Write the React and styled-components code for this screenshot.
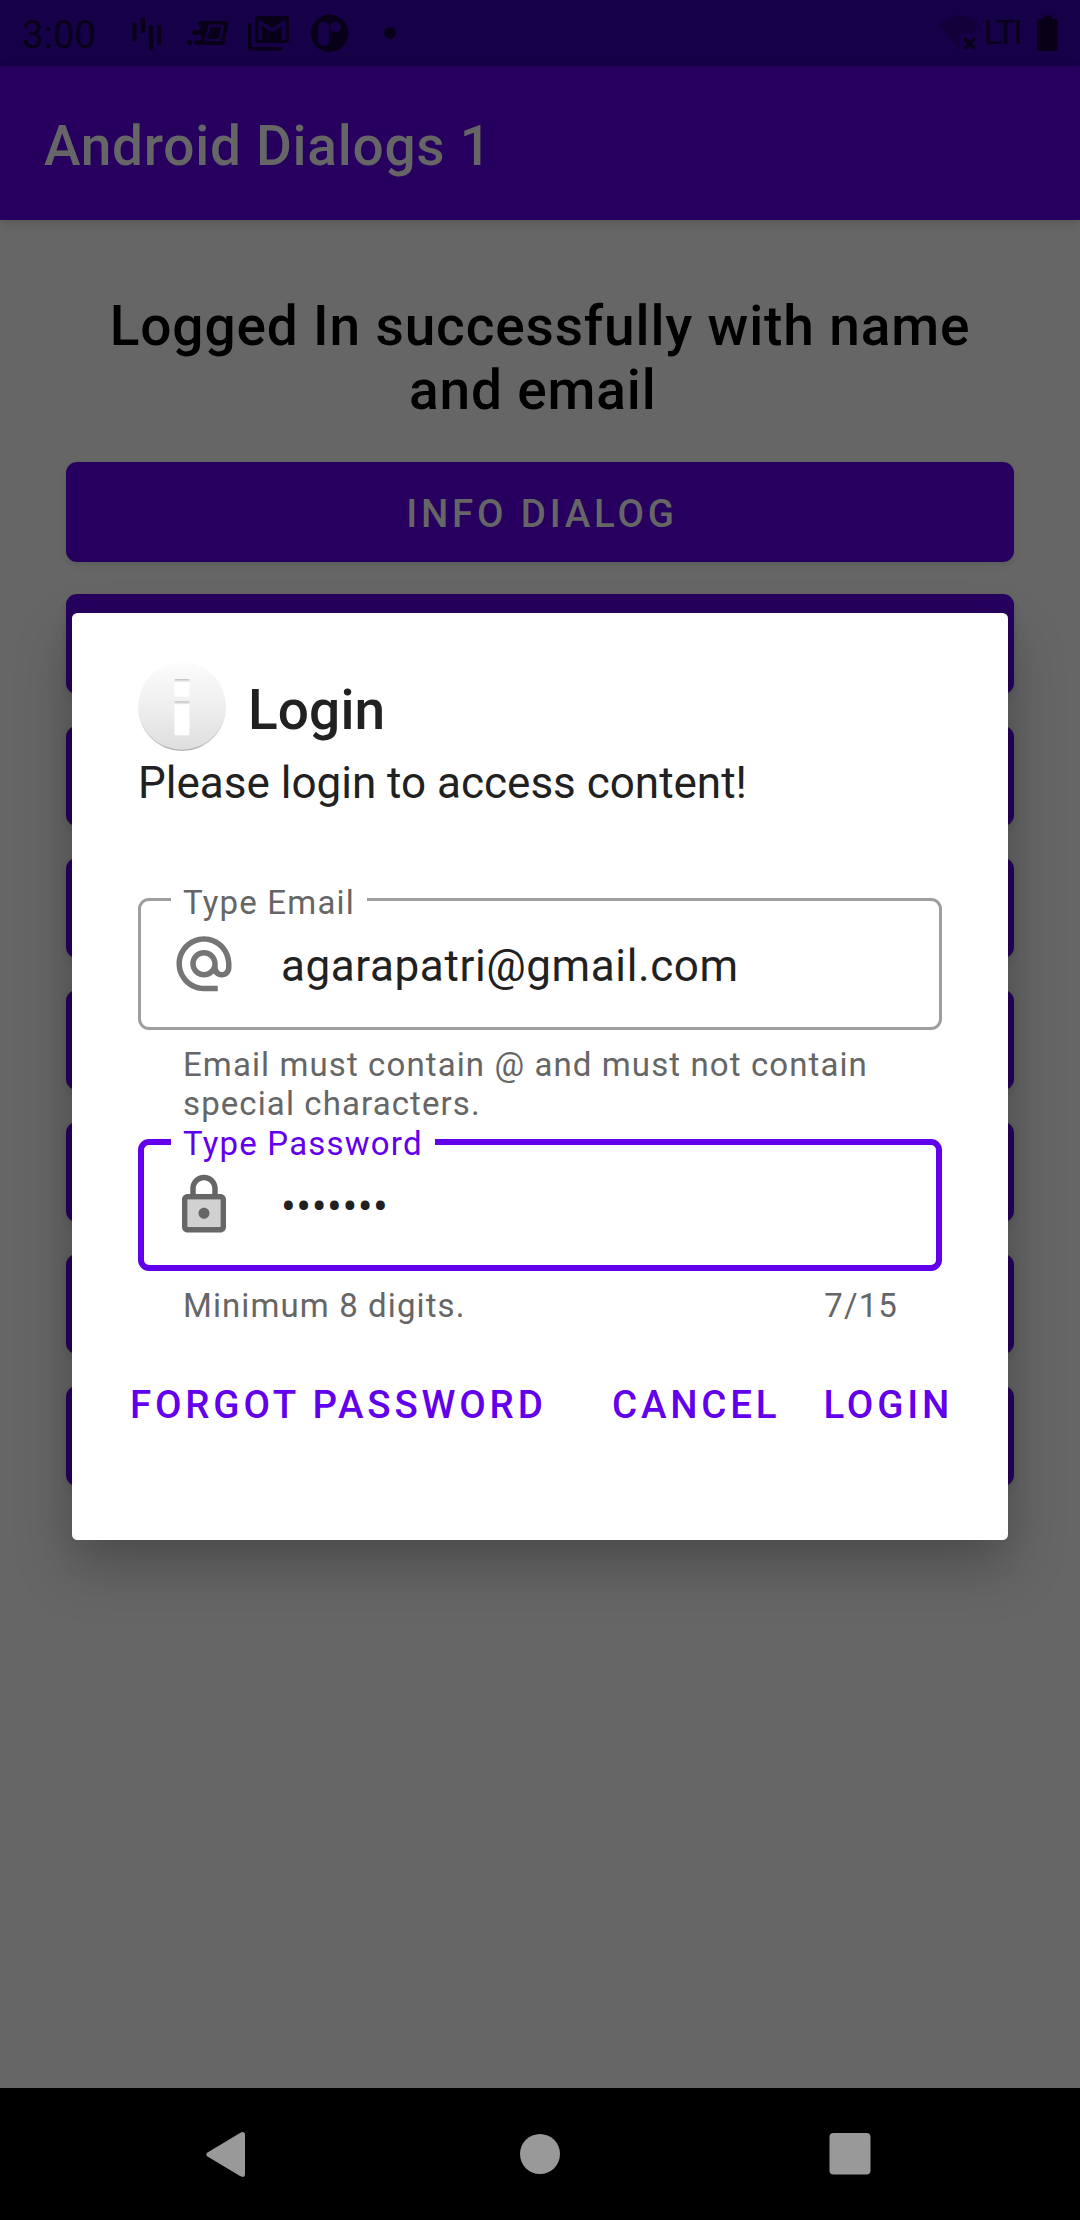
import React from "react";
import styled, { createGlobalStyle, css } from "styled-components";

const GlobalStyle = createGlobalStyle`
  *, *::before, *::after { box-sizing: border-box; }
  body { margin: 0; background: #000; font-family: Roboto, "Noto Sans", sans-serif; }
  h1, h2, p { margin: 0; }
  button { font-family: inherit; border: 0; margin: 0; padding: 0; }
  svg { display: block; flex: none; }
`;

const Phone = styled.div`
  position: relative;
  width: 1080px;
  height: 2220px;
  display: flex;
  flex-direction: column;
  overflow: hidden;
`;

const StatusBar = styled.header`
  height: 66px;
  flex: none;
  display: flex;
  justify-content: space-between;
  background: #160048;
  color: #080019;
`;

const StatusGroup = styled.div`
  display: flex;
  align-items: center;
  height: 66px;
`;

const Clock = styled.span`
  width: 110px;
  padding-left: 22px;
  font-size: 38.5px;
  line-height: 45px;
  padding-top: 2px;
`;

const Network = styled.span`
  width: 52px;
  font-size: 33.5px;
  line-height: 40px;
  padding-left: 2px;
  letter-spacing: -2px;
`;

const AppBar = styled.div`
  position: relative;
  height: 154px;
  flex: none;
  display: flex;
  align-items: center;
  padding-left: 44px;
  background: #27005f;
  box-shadow: 0 3px 10px rgba(0, 0, 0, 0.14);
`;

const AppTitle = styled.h1`
  font-size: 55px;
  font-weight: 500;
  line-height: 64px;
  letter-spacing: 0.72px;
  padding-top: 6px;
  color: #666;
`;

const Main = styled.main`
  flex: 1;
  display: flex;
  flex-direction: column;
  padding: 74px 66px 0;
  background: #666;
`;

const Result = styled.h2`
  font-size: 55px;
  font-weight: 500;
  line-height: 64px;
  letter-spacing: 0.85px;
  text-align: center;
  color: #000;
  margin-bottom: 40px;
`;

const ButtonStack = styled.div`
  display: flex;
  flex-direction: column;
  gap: 32px;
`;

const buttonText = css`
  font-size: 38.5px;
  font-weight: 500;
  line-height: 45px;
  letter-spacing: 3.8px;
  text-transform: uppercase;
`;

const FilledButton = styled.button`
  ${buttonText}
  height: 100px;
  padding: 3px 0 0 4px;
  border-radius: 11px;
  background: #27005f;
  color: #666;
  box-shadow: 0 3px 6px rgba(0, 0, 0, 0.1);
`;

const DialogLayer = styled.div`
  position: absolute;
  top: 66px;
  left: 0;
  right: 0;
  bottom: 133px;
  display: flex;
  align-items: center;
  justify-content: center;
`;

const Dialog = styled.section`
  width: 936px;
  height: 927px;
  padding: 50px 66px 0;
  border-radius: 5.5px;
  background: #fff;
  color: #212121;
  box-shadow: 0 26px 56px rgba(0, 0, 0, 0.25), 0 0 30px rgba(0, 0, 0, 0.05);
`;

const DialogHeader = styled.div`
  display: flex;
  align-items: center;
  gap: 22px;
  height: 88px;
`;

const DialogTitle = styled.h2`
  font-size: 55px;
  font-weight: 500;
  line-height: 64px;
  letter-spacing: 0.1px;
  padding-top: 6px;
`;

const Message = styled.p`
  margin-top: 6px;
  font-size: 44px;
  line-height: 52px;
`;

const Fields = styled.div`
  margin-top: 89px;
  display: flex;
  flex-direction: column;
  gap: 16px;
`;

const FieldBox = styled.div`
  position: relative;
  height: 132px;
  display: flex;
  align-items: center;
  padding-left: ${(p) => (p.$active ? 27 : 30)}px;
  border: ${(p) => (p.$active ? "6px solid #6200ee" : "3px solid #9e9e9e")};
  border-radius: 11px;
`;

const FieldLabel = styled.label`
  position: absolute;
  top: ${(p) => (p.$active ? -21 : -18)}px;
  left: ${(p) => (p.$active ? 27 : 30)}px;
  padding: 0 12px;
  background: #fff;
  color: ${(p) => (p.$active ? "#6200ee" : "#666")};
  font-size: 33px;
  line-height: 39px;
  letter-spacing: 1.2px;
`;

const FieldValue = styled.span`
  margin-left: 44px;
  padding-top: 4px;
  font-size: 44px;
  line-height: 52px;
  letter-spacing: ${(p) => (p.$masked ? "0.5px" : "0.6px")};
`;

const HelperRow = styled.div`
  display: flex;
  justify-content: space-between;
  margin: 15px 44px 0 45px;
  color: #666;
  font-size: 33px;
  line-height: 39px;
  letter-spacing: 1.1px;
`;

const Actions = styled.div`
  display: flex;
  margin: 57px -11px 0 -8px;
`;

const TextButton = styled.button`
  ${buttonText}
  background: none;
  color: #6200ee;
  &:first-child { margin-right: auto; }
  & + & + & { margin-left: 43px; }
`;

const NavBar = styled.nav`
  height: 132px;
  flex: none;
  display: flex;
  align-items: center;
  justify-content: center;
  gap: 244px;
  background: #000;
`;

function NotificationIcons() {
  return (
    <svg width="290" height="66" viewBox="110 0 290 66" fill="#080019">
      <rect x="132.5" y="22.5" width="4" height="19" rx="2" />
      <rect x="140.5" y="17.5" width="4.5" height="15.5" rx="2" />
      <rect x="148.8" y="25" width="4.2" height="25.5" rx="2" />
      <rect x="157" y="25" width="4.3" height="20" rx="2" />
      <circle cx="189.5" cy="42.5" r="2.6" />
      <path fillRule="evenodd" d="M201 21H226Q228.5 21 228 24L224.5 43Q224 45 222 45H196Q194 45 194 43T196 40.5H200.5L201.500 35H194.500Q192 35 192 32.500T194.500 30H199L201.500 26H200Q198 26 198 23.500T201 21ZM208.500 24.500L204.500 41H221L224.500 24.500ZM210.500 27H221.500L218.500 39H207Z" />
      <path d="M248 23V47.500Q248 50.500 251 50.500H282V47H251.500V23Z" />
      <path fillRule="evenodd" d="M258.500 16H286Q289 16 289 19V40Q289 43 286 43H258.500Q255 43 255 40V19Q255 16 258.500 16ZM258.500 20V40H262V25L272 32.500L282 25V40H285.500V20H284L272 28.500L260 20Z" />
      <circle cx="329.500" cy="33.300" r="18.700" />
      <rect x="318" y="21.500" width="11" height="24.500" rx="5.500" fill="#160048" />
      <circle cx="335.300" cy="27" r="5.200" fill="#160048" />
      <circle cx="390" cy="33" r="6" />
    </svg>
  );
}

function WifiIcon() {
  return (
    <svg width="44" height="66" viewBox="938 0 44 66">
      <path d="M938.500 24Q958.500 7 979 24L971 34H960V48L958.500 49Z" fill="#11003a" />
      <path d="M965.500 39.500L973.500 47.500M973.500 39.500L965.500 47.500" stroke="#080019" strokeWidth="3.600" strokeLinecap="round" />
    </svg>
  );
}

function BatteryIcon() {
  return (
    <svg width="46" height="66" viewBox="1034 0 46 66">
      <path d="M1043.500 15.500h8.500v3.500h4q2 0 2 2v28q0 2-2 2h-17q-2 0-2-2v-28q0-2 2-2h4.500z" fill="#080019" />
    </svg>
  );
}

function InfoIcon() {
  return (
    <svg width="88" height="88" viewBox="0 0 88 88">
      <defs>
        <linearGradient id="disc" x1="0" y1="0" x2="0" y2="1">
          <stop offset="0" stopColor="#fcfcfc" />
          <stop offset="0.5" stopColor="#efefef" />
          <stop offset="1" stopColor="#dedede" />
        </linearGradient>
        <linearGradient id="rim" x1="0" y1="0" x2="0" y2="1">
          <stop offset="0.4" stopColor="#b4b4b4" stopOpacity="0" />
          <stop offset="1" stopColor="#b0b0b0" />
        </linearGradient>
        <linearGradient id="inset" x1="0" y1="0" x2="0" y2="1">
          <stop offset="0" stopColor="#bdbdbd" />
          <stop offset="1" stopColor="#fff" />
        </linearGradient>
      </defs>
      <circle cx="44" cy="44" r="44" fill="url(#rim)" />
      <circle cx="44" cy="43" r="43.700" fill="url(#disc)" />
      <rect x="36.500" y="16" width="15" height="17.500" rx="1.500" fill="#fff" />
      <rect x="36.500" y="16" width="15" height="3.500" rx="1" fill="url(#inset)" />
      <rect x="36.500" y="38.300" width="15" height="34" rx="1.500" fill="#fff" />
      <rect x="36.500" y="38.300" width="15" height="3.500" rx="1" fill="url(#inset)" />
    </svg>
  );
}

function AtIcon() {
  return (
    <svg width="66" height="66" viewBox="0 0 24 24" fill="#757575">
      <path d="M12 1.950c-5.520 0-10 4.480-10 10s4.480 10 10 10h5v-2h-5c-4.340 0-8-3.660-8-8s3.660-8 8-8 8 3.660 8 8v1.430c0 .79-.71 1.570-1.500 1.570s-1.500-.78-1.500-1.570v-1.430c0-2.760-2.240-5-5-5s-5 2.240-5 5 2.240 5 5 5c1.380 0 2.640-.56 3.540-1.470.65.89 1.770 1.470 2.960 1.470 1.970 0 3.500-1.600 3.500-3.570v-1.430c0-5.520-4.480-10-10-10zm0 13c-1.660 0-3-1.340-3-3s1.340-3 3-3 3 1.340 3 3-1.340 3-3 3z" />
    </svg>
  );
}

function LockIcon() {
  return (
    <svg width="66" height="66" viewBox="0 0 24 24" fill="#666">
      <path d="M6 20h12V10H6v10z" fill="#d1d1d1" />
      <path d="M18 8h-1V6c0-2.760-2.240-5-5-5S7 3.240 7 6v2H6c-1.100 0-2 .9-2 2v10c0 1.100.9 2 2 2h12c1.100 0 2-.9 2-2V10c0-1.100-.9-2-2-2zM9 6c0-1.660 1.340-3 3-3s3 1.340 3 3v2H9V6zm9 14H6V10h12v10zm-6-3c1.100 0 2-.9 2-2s-.9-2-2-2-2 .9-2 2 .9 2 2 2z" />
    </svg>
  );
}

function Field({ label, value, icon, helper, counter, active, masked }) {
  return (
    <div>
      <FieldBox $active={active}>
        <FieldLabel $active={active}>{label}</FieldLabel>
        {icon}
        <FieldValue $masked={masked}>{value}</FieldValue>
      </FieldBox>
      <HelperRow>
        <span>{helper}</span>
        {counter && <span>{counter}</span>}
      </HelperRow>
    </div>
  );
}

const menuButtons = ["Info Dialog", "", "", "", "", "", "", ""];

export default function App() {
  return (
    <>
      <GlobalStyle />
      <Phone>
        <StatusBar>
          <StatusGroup>
            <Clock>3:00</Clock>
            <NotificationIcons />
          </StatusGroup>
          <StatusGroup>
            <WifiIcon />
            <Network>LTI</Network>
            <BatteryIcon />
          </StatusGroup>
        </StatusBar>
        <AppBar>
          <AppTitle>Android Dialogs 1</AppTitle>
        </AppBar>
        <Main>
          <Result>Logged In successfully with name and email&nbsp;</Result>
          <ButtonStack>
            {menuButtons.map((text, i) => (
              <FilledButton key={i}>{text}</FilledButton>
            ))}
          </ButtonStack>
        </Main>
        <DialogLayer>
          <Dialog role="dialog">
            <DialogHeader>
              <InfoIcon />
              <DialogTitle>Login</DialogTitle>
            </DialogHeader>
            <Message>Please login to access content!</Message>
            <Fields>
              <Field
                label="Type Email"
                value="agarapatri@gmail.com"
                icon={<AtIcon />}
                helper="Email must contain @ and must not contain special characters."
              />
              <Field
                active
                masked
                label="Type Password"
                value="•••••••"
                icon={<LockIcon />}
                helper="Minimum 8 digits."
                counter="7/15"
              />
            </Fields>
            <Actions>
              <TextButton>Forgot Password</TextButton>
              <TextButton>Cancel</TextButton>
              <TextButton>Login</TextButton>
            </Actions>
          </Dialog>
        </DialogLayer>
        <NavBar>
          <svg width="66" height="66" viewBox="0 0 66 66" fill="#999">
            <path d="M10.500 31.500L43 11.900Q47.800 9.600 48 14V53Q47.800 57.400 43 55.100L10.500 35.500Q8 33.500 10.500 31.500Z" />
          </svg>
          <svg width="66" height="66" viewBox="0 0 66 66" fill="#999">
            <circle cx="33" cy="33" r="20" />
          </svg>
          <svg width="66" height="66" viewBox="0 0 66 66" fill="#999">
            <rect x="12.500" y="12" width="41" height="41.500" rx="4" />
          </svg>
        </NavBar>
      </Phone>
    </>
  );
}
